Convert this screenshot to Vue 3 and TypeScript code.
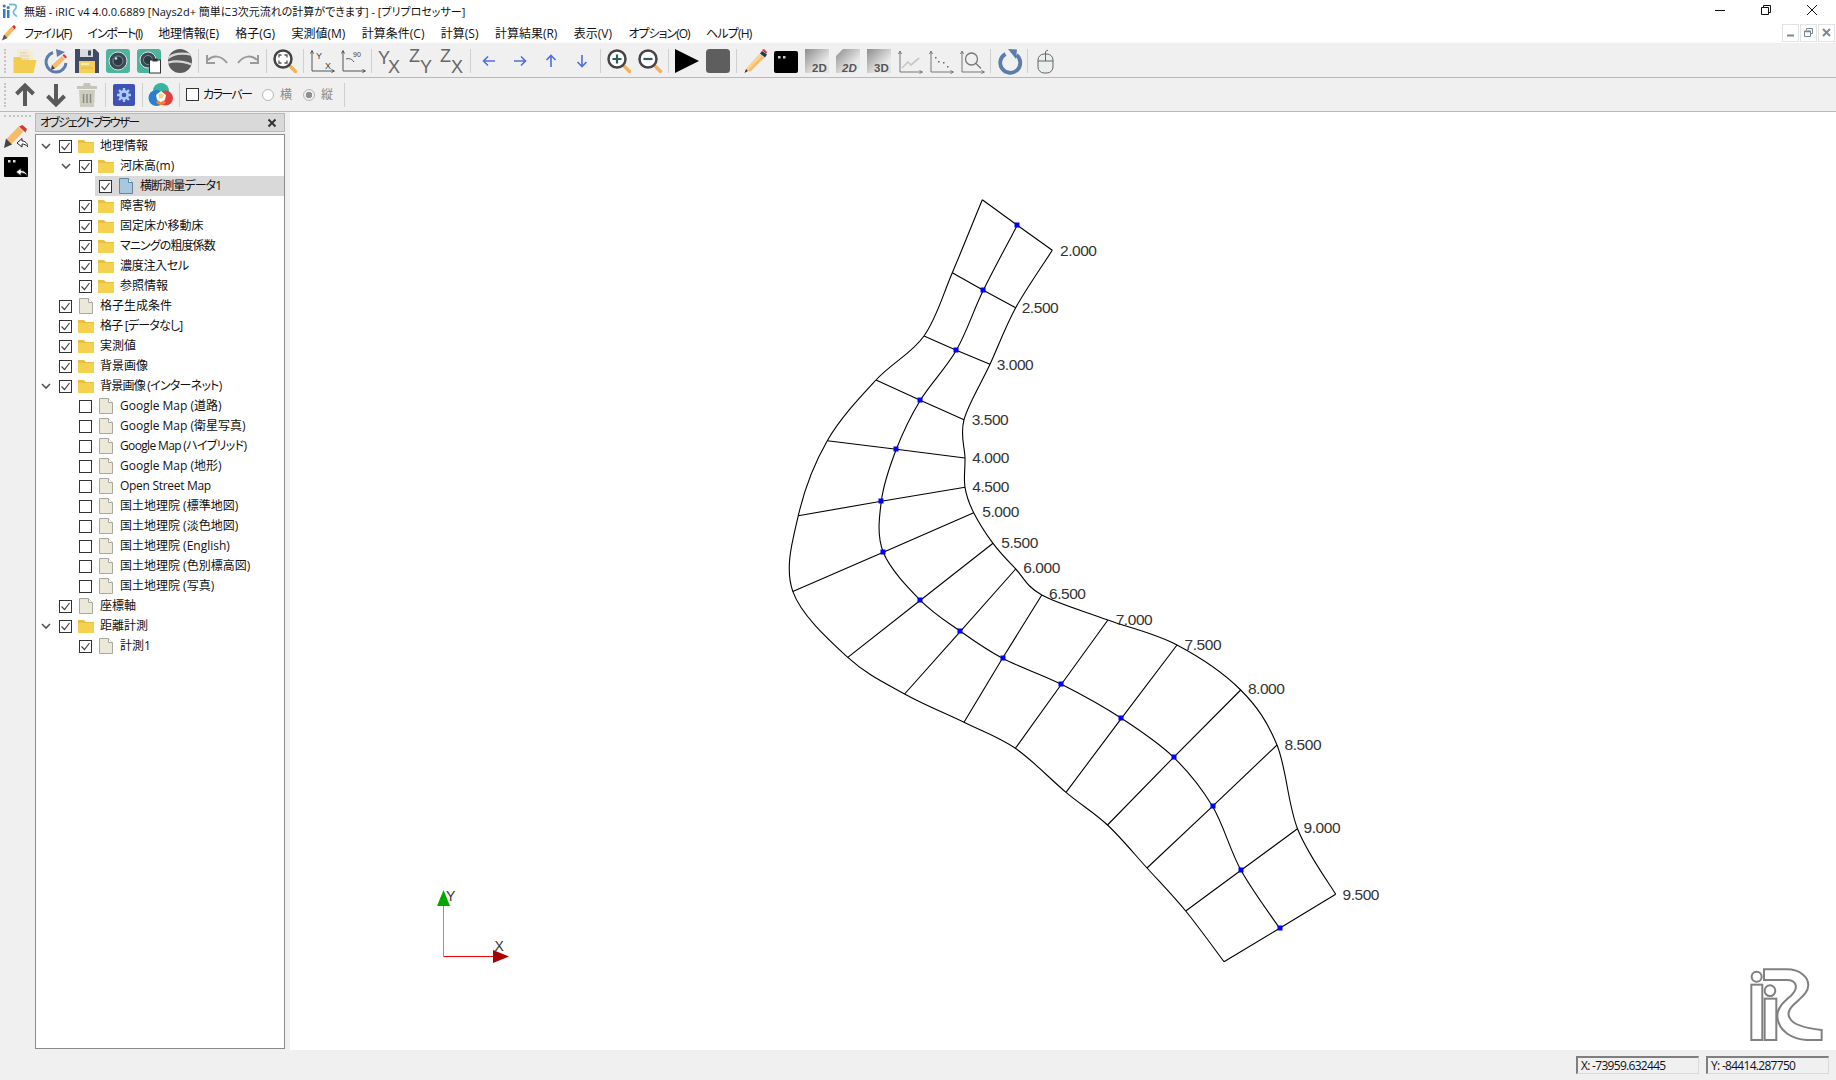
<script setup lang="ts">
type Pt = [number, number]
interface Row { level: number; arrow?: boolean; checked: boolean; icon: 'folder' | 'doc' | 'sel'; label: string; selected?: boolean; ls?: number }

const rows: Row[] = [
  { level: 0, arrow: true, checked: true, icon: 'folder', label: '地理情報' },
  { level: 1, arrow: true, checked: true, icon: 'folder', label: '河床高(m)' },
  { level: 2, checked: true, icon: 'sel', label: '横断測量データ1', selected: true, ls: -0.9 },
  { level: 1, checked: true, icon: 'folder', label: '障害物' },
  { level: 1, checked: true, icon: 'folder', label: '固定床か移動床' },
  { level: 1, checked: true, icon: 'folder', label: 'マニングの粗度係数', ls: -0.9 },
  { level: 1, checked: true, icon: 'folder', label: '濃度注入セル', ls: -0.3 },
  { level: 1, checked: true, icon: 'folder', label: '参照情報' },
  { level: 0, checked: true, icon: 'doc', label: '格子生成条件' },
  { level: 0, checked: true, icon: 'folder', label: '格子 [データなし]', ls: -0.8 },
  { level: 0, checked: true, icon: 'folder', label: '実測値' },
  { level: 0, checked: true, icon: 'folder', label: '背景画像' },
  { level: 0, arrow: true, checked: true, icon: 'folder', label: '背景画像 (インターネット)', ls: -0.75 },
  { level: 1, checked: false, icon: 'doc', label: 'Google Map (道路)' },
  { level: 1, checked: false, icon: 'doc', label: 'Google Map (衛星写真)' },
  { level: 1, checked: false, icon: 'doc', label: 'Google Map (ハイブリッド)', ls: -0.65 },
  { level: 1, checked: false, icon: 'doc', label: 'Google Map (地形)' },
  { level: 1, checked: false, icon: 'doc', label: 'Open Street Map', ls: -0.3 },
  { level: 1, checked: false, icon: 'doc', label: '国土地理院 (標準地図)' },
  { level: 1, checked: false, icon: 'doc', label: '国土地理院 (淡色地図)' },
  { level: 1, checked: false, icon: 'doc', label: '国土地理院 (English)' },
  { level: 1, checked: false, icon: 'doc', label: '国土地理院 (色別標高図)' },
  { level: 1, checked: false, icon: 'doc', label: '国土地理院 (写真)' },
  { level: 0, checked: true, icon: 'doc', label: '座標軸' },
  { level: 0, arrow: true, checked: true, icon: 'folder', label: '距離計測' },
  { level: 1, checked: true, icon: 'doc', label: '計測1' },
]

const menus = [
  { t: 'ファイル(F)', ls: -1.1 }, { t: 'インポート(I)', ls: -1.25 }, { t: '地理情報(E)', ls: -0.15 }, { t: '格子(G)', ls: 0 },
  { t: '実測値(M)', ls: 0 }, { t: '計算条件(C)', ls: 0 }, { t: '計算(S)', ls: 0 }, { t: '計算結果(R)', ls: 0 },
  { t: '表示(V)', ls: 0 }, { t: 'オプション(O)', ls: -1 }, { t: 'ヘルプ(H)', ls: -0.8 },
]

const left: Pt[] = [[982.3, 199.7], [952.3, 272.7], [924, 336], [876, 380], [827.3, 440.7], [798.3, 515.7], [792.8, 591.4], [847.8, 657.4], [904.6, 694], [964, 722.3], [1015.4, 748.3], [1066, 792.3], [1107.5, 825], [1147, 868], [1185.7, 911], [1224, 961.7]]
const mid: Pt[] = [[1017.3, 225.3], [983.3, 290.3], [956.3, 350.3], [920.3, 400.3], [896.3, 449.3], [881.3, 501.3], [883.3, 552.3], [920.4, 600.3], [960.4, 631.3], [1002.5, 658.3], [1061.4, 684.3], [1121.4, 718.3], [1173.6, 757.3], [1212.5, 806.3], [1241, 870.3], [1279.6, 928.3]]
const right: Pt[] = [[1052.3, 250.3], [1015.7, 307.7], [990, 364.3], [964, 419.7], [965, 458], [965, 487.3], [973.7, 512.7], [993, 543.3], [1015.7, 569], [1041.8, 595], [1107.9, 620], [1177, 645], [1240.7, 690], [1277, 745], [1297.5, 828.7], [1335.7, 894.3]]
const labels: { t: string; x: number; y: number }[] = [
  { t: '2.000', x: 1060, y: 250.7 }, { t: '2.500', x: 1021.7, y: 307.7 }, { t: '3.000', x: 996.7, y: 364.7 }, { t: '3.500', x: 971.7, y: 419.7 },
  { t: '4.000', x: 972.3, y: 457.7 }, { t: '4.500', x: 972.3, y: 486.7 }, { t: '5.000', x: 982.3, y: 511.7 }, { t: '5.500', x: 1001.3, y: 542.3 },
  { t: '6.000', x: 1023.3, y: 567.3 }, { t: '6.500', x: 1049, y: 593.7 }, { t: '7.000', x: 1115.7, y: 619.3 }, { t: '7.500', x: 1184.6, y: 644.3 },
  { t: '8.000', x: 1247.9, y: 688.3 }, { t: '8.500', x: 1284.6, y: 744.3 }, { t: '9.000', x: 1303.6, y: 827.3 }, { t: '9.500', x: 1342.5, y: 894.3 },
]

function spline(p: Pt[]): string {
  let d = `M${p[0][0]} ${p[0][1]}`
  for (let i = 0; i < p.length - 1; i++) {
    const a = p[Math.max(i - 1, 0)], b = p[i], c = p[i + 1], e = p[Math.min(i + 2, p.length - 1)]
    const c1: Pt = [b[0] + (c[0] - a[0]) / 6, b[1] + (c[1] - a[1]) / 6]
    const c2: Pt = [c[0] - (e[0] - b[0]) / 6, c[1] - (e[1] - b[1]) / 6]
    d += ` C${c1[0].toFixed(1)} ${c1[1].toFixed(1)} ${c2[0].toFixed(1)} ${c2[1].toFixed(1)} ${c[0]} ${c[1]}`
  }
  return d
}
const banks = [spline(left), spline(mid), spline(right)]
const cross = left.map((l, i) => `M${l[0]} ${l[1]} L${mid[i][0]} ${mid[i][1]} L${right[i][0]} ${right[i][1]}`)
const dots = mid.map(m => ({ x: Math.round(m[0]) - 2.5, y: Math.round(m[1]) - 2.5 }))
</script>

<template>
  <div class="app">
    <header class="titlebar">
      <svg class="applogo" viewBox="0 0 16 16"><rect x="1" y="6" width="2.5" height="9" fill="#2f7fc1"/><rect x="5" y="7" width="2.5" height="8" fill="#2f7fc1"/><circle cx="2.2" cy="3" r="1.6" fill="#2f7fc1"/><circle cx="6.2" cy="4.5" r="1.5" fill="#2f7fc1"/><path d="M7 1.5h4c4 0 4 3 2 5s-3 4 2 7" fill="none" stroke="#6fc0e0" stroke-width="1.8"/></svg>
      <span class="title">無題 - iRIC v4 4.0.0.6889 [Nays2d+ 簡単に3次元流れの計算ができます] - [プリプロセッサー]</span>
      <div class="winbtns">
        <span class="wb"><svg width="10" height="10" viewBox="0 0 10 10"><path d="M0 5.5h10" stroke="#111"/></svg></span>
        <span class="wb"><svg width="10" height="10" viewBox="0 0 10 10"><path d="M2.5 2.5V.5h7v7h-2M.5 2.5h7v7h-7z" fill="none" stroke="#111"/></svg></span>
        <span class="wb"><svg width="10" height="10" viewBox="0 0 10 10"><path d="M0 0l10 10M10 0L0 10" stroke="#111"/></svg></span>
      </div>
    </header>

    <nav class="menubar">
      <svg class="menupencil" viewBox="0 0 14 16"><path d="M3.500 11.500L11 3" stroke="#f5b968" stroke-width="4.200"/><path d="M10 1.500L12 0l2 2-1.500 2.500z" fill="#d8342c"/><path d="M2 9.500l3.500 3.500L0 15.500z" fill="#555"/></svg>
      <ul class="menus"><li v-for="m in menus" :key="m.t" :style="{ letterSpacing: m.ls + 'px' }">{{ m.t }}</li></ul>
      <div class="mdibtns">
        <span class="mb"><svg width="9" height="9" viewBox="0 0 9 9"><path d="M1 7.500h7" stroke="#7c8794" stroke-width="2"/></svg></span>
        <span class="mb"><svg width="9" height="9" viewBox="0 0 9 9"><path d="M2.500 2V.5h6v5H7M.5 3h6v5.500h-6z" fill="none" stroke="#7c8794"/><path d="M.5 3.500h6" stroke="#7c8794" stroke-width="1.500"/></svg></span>
        <span class="mb"><svg width="9" height="9" viewBox="0 0 9 9"><path d="M1 1l7 7M8 1L1 8" stroke="#7c8794" stroke-width="2"/></svg></span>
      </div>
    </nav>

    <div class="toolbar">
      <i class="grip"></i>
      <!-- open -->
      <svg class="ic" viewBox="0 0 24 24"><path d="M4 0h12l4 4v12H4z" fill="#f4ecd2"/><path d="M7 4h7M7 7h9M7 10h9" stroke="#d9cfb0"/><path d="M.5 8h7l2 3h14l-3 13H.5z" fill="#f3cd4f"/></svg>
      <!-- refresh pencil -->
      <svg class="ic" viewBox="0 0 24 24"><path d="M9 3.500A10 10 0 1 0 22 14" fill="none" stroke="#5d7cab" stroke-width="3"/><path d="M12 0l9 3-8 5z" fill="#5d7cab"/><path d="M18 7l3 3-9 9-5 2 1-5z" fill="#f6bb6b"/><path d="M18.500 6.500L20 5l3 3-1.500 1.500z" fill="#d73a3a"/><path d="M8 16l-1 5 4-1.500z" fill="#444"/></svg>
      <!-- save -->
      <svg class="ic" viewBox="0 0 24 24"><path d="M0 0h20l4 4v20H0z" fill="#3f4b66"/><rect x="5" y="0" width="13" height="8" fill="#dcdcdc"/><rect x="13" y="1.500" width="3" height="5" fill="#3f4b66"/><rect x="4" y="12" width="16" height="12" fill="#f5cf57"/><path d="M6 15h8" stroke="#fff" stroke-width="1.200"/><path d="M6 19h12" stroke="#e8b93a"/></svg>
      <!-- camera -->
      <svg class="ic" viewBox="0 0 24 24"><rect width="24" height="24" rx="3" fill="#4fb49d"/><circle cx="12" cy="12" r="9" fill="#3c4a55" stroke="#d5e4e0" stroke-width="1"/><circle cx="12" cy="12" r="5" fill="#2c3a46" stroke="#7a8b99"/><circle cx="10" cy="9.500" r="1.300" fill="#cfe0e8"/></svg>
      <svg class="ic" viewBox="0 0 24 24"><rect width="24" height="24" rx="3" fill="#4fb49d"/><circle cx="11" cy="11" r="8" fill="#3c4a55" stroke="#d5e4e0" stroke-width="1"/><circle cx="11" cy="11" r="4.500" fill="#2c3a46" stroke="#7a8b99"/><rect x="12.500" y="11" width="11" height="13" fill="#fff" stroke="#333"/><rect x="15.500" y="9.500" width="5" height="3" fill="#333"/></svg>
      <!-- globe -->
      <svg class="ic" viewBox="0 0 24 24"><defs><clipPath id="gl"><circle cx="12" cy="12" r="12"/></clipPath></defs><circle cx="12" cy="12" r="12" fill="#5c5c5c"/><g clip-path="url(#gl)" fill="none" stroke="#d8d8d8" stroke-width="2.200"><path d="M-1 10C6 3 16 4 25 6"/><path d="M-1 14c8-3 16-2 26 2"/></g></svg>
      <i class="sep"></i>
      <svg class="ic" viewBox="0 0 24 24"><path d="M3 11c5-5 13-5 19 3" fill="none" stroke="#9a9a9a" stroke-width="2"/><path d="M2 6v8h8" fill="none" stroke="#9a9a9a" stroke-width="2"/></svg>
      <svg class="ic" viewBox="0 0 24 24"><path d="M21 11c-5-5-13-5-19 3" fill="none" stroke="#9a9a9a" stroke-width="2"/><path d="M22 6v8h-8" fill="none" stroke="#9a9a9a" stroke-width="2"/></svg>
      <i class="sep"></i>
      <svg class="ic" viewBox="0 0 24 24"><path d="M15 15l7.500 7.500" stroke="#f2b15f" stroke-width="3.500" stroke-linecap="round"/><circle cx="10" cy="10" r="8.500" fill="#fff" stroke="#444" stroke-width="2.500"/><path d="M6 8.500V6h2.500M11.500 6H14v2.500M14 11.500V14h-2.500M8.500 14H6v-2.500" fill="none" stroke="#555" stroke-width="1.300"/></svg>
      <i class="sep"></i>
      <svg class="ic" viewBox="0 0 24 24"><path d="M2 22V2M.5 4.500L2 1.500l1.500 3M2 22h22M21.500 20.500l3 1.500-3 1.500" fill="none" stroke="#555"/><text x="6" y="10" class="ict" font-size="9">Y</text><text x="15" y="20" class="ict" font-size="9">X</text></svg>
      <svg class="ic" viewBox="0 0 24 24"><path d="M2 22V2M.5 4.500L2 1.500l1.500 3M2 22h22M21.500 20.500l3 1.500-3 1.500M13 13c-2-3-5-4-8-3" fill="none" stroke="#555"/><text x="12" y="8" class="ict" font-size="7">90</text></svg>
      <i class="sep"></i>
      <svg class="ic" viewBox="0 0 24 24"><text x="0" y="15" class="icx" font-size="18">Y</text><text x="10" y="24" class="icx" font-size="18">X</text></svg>
      <svg class="ic" viewBox="0 0 24 24"><text x="0" y="13" class="icx" font-size="18">Z</text><text x="11" y="24" class="icx" font-size="18">Y</text></svg>
      <svg class="ic" viewBox="0 0 24 24"><text x="0" y="13" class="icx" font-size="18">Z</text><text x="11" y="24" class="icx" font-size="18">X</text></svg>
      <i class="sep"></i>
      <svg class="ic" viewBox="0 0 24 24"><path d="M18 12H6.500M11 7.500L6.500 12l4.500 4.500" fill="none" stroke="#4d6fe3" stroke-width="1.600"/></svg>
      <svg class="ic" viewBox="0 0 24 24"><path d="M6 12h11.500M13 7.500l4.500 4.500-4.500 4.500" fill="none" stroke="#4d6fe3" stroke-width="1.600"/></svg>
      <svg class="ic" viewBox="0 0 24 24"><path d="M12 18V6.500M7.500 11L12 6.500l4.500 4.500" fill="none" stroke="#4d6fe3" stroke-width="1.600"/></svg>
      <svg class="ic" viewBox="0 0 24 24"><path d="M12 6v11.500M7.500 13l4.500 4.500 4.500-4.500" fill="none" stroke="#4d6fe3" stroke-width="1.600"/></svg>
      <i class="sep"></i>
      <svg class="ic" viewBox="0 0 24 24"><path d="M15 15l7.500 7.500" stroke="#f2b15f" stroke-width="3.500" stroke-linecap="round"/><circle cx="10" cy="10" r="8.500" fill="#fff" stroke="#444" stroke-width="2.500"/><path d="M5.500 10h9M10 5.500v9" stroke="#2f5a5a" stroke-width="2.200"/></svg>
      <svg class="ic" viewBox="0 0 24 24"><path d="M15 15l7.500 7.500" stroke="#f2b15f" stroke-width="3.500" stroke-linecap="round"/><circle cx="10" cy="10" r="8.500" fill="#fff" stroke="#444" stroke-width="2.500"/><path d="M5.500 10h9" stroke="#2f5a5a" stroke-width="2.200"/></svg>
      <i class="sep"></i>
      <svg class="ic" viewBox="0 0 24 24"><path d="M0 0l24 12L0 24z" fill="#000"/></svg>
      <svg class="ic" viewBox="0 0 24 24"><rect width="24" height="24" rx="3.500" fill="#5e5e5e"/></svg>
      <i class="sep"></i>
      <svg class="ic" viewBox="0 0 24 24"><path d="M16.500 5l5 3.500L7 23l-4-3z" fill="#f6bb6b"/><path d="M16.500 5l2.500 2L5 21.500 3 20z" fill="#f9d294"/><path d="M17 4.500L19 2l5 3.500-2 3z" fill="#1d3b55"/><path d="M19 1l2-1 3 3-1 2z" fill="#d9363a"/><path d="M3 20l-1.500 4L5 22z" fill="#333"/></svg>
      <svg class="ic" viewBox="0 0 24 24"><rect y="2" width="24" height="22" rx="2" fill="#000"/><path d="M4 7h2.500v2.500H4zM9 7h2.500v2.500H9z" fill="#ccc"/></svg>
      <svg class="ic" viewBox="0 0 24 24"><defs><linearGradient id="g2" x1="0" y1="0" x2="1" y2="1"><stop offset="0" stop-color="#8c8c8c"/><stop offset="0.700" stop-color="#eaeaea"/><stop offset="1" stop-color="#e0e0e0"/></linearGradient></defs><rect width="24" height="24" fill="url(#g2)"/><text x="7" y="23" class="ic2" font-size="11.500">2D</text></svg>
      <svg class="ic" viewBox="0 0 24 24"><path d="M7 0h17v18l-6 6H0V7z" fill="url(#g2)"/><text x="6" y="23" class="ic2" font-style="italic" font-size="11.500">2D</text></svg>
      <svg class="ic" viewBox="0 0 24 24"><rect width="24" height="24" fill="url(#g2)"/><text x="7" y="23" class="ic2" font-size="11.500">3D</text></svg>
      <svg class="ic" viewBox="0 0 24 24"><path d="M2 23V3M.5 5L2 2l1.500 3M2 23h22M21.500 21.500l3 1.500-3 1.500" fill="none" stroke="#777"/><path d="M4 19l6-6 3 3 8-7" fill="none" stroke="#c9c9c9" stroke-width="1.700"/></svg>
      <svg class="ic" viewBox="0 0 24 24"><path d="M2 23V3M.5 5L2 2l1.500 3M2 23h22M21.500 21.500l3 1.500-3 1.500" fill="none" stroke="#777"/><path d="M6 8h1.500v1.500H6zM9 12h1.500v1.500H9zM14 13h1.500v1.500H14zM18 17h1.500v1.500H18z" fill="#666"/></svg>
      <svg class="ic" viewBox="0 0 24 24"><path d="M2 23V3M.5 5L2 2l1.500 3M2 23h22M21.500 21.500l3 1.500-3 1.500" fill="none" stroke="#777"/><circle cx="11.500" cy="10" r="6" fill="none" stroke="#777" stroke-width="1.300"/><path d="M16 14.500l5 5" stroke="#777" stroke-width="1.300"/></svg>
      <i class="sep"></i>
      <svg class="ic" viewBox="0 0 24 24"><path d="M8.500 5A10 10 0 1 0 19.500 6" fill="none" stroke="#5b7dad" stroke-width="3.800"/><path d="M11 0l9 .5-1 9.500z" fill="#5b7dad"/></svg>
      <i class="sep"></i>
      <svg class="ic" viewBox="0 0 24 24"><rect x="4" y="5" width="15" height="19" rx="6" fill="#e9eeee" stroke="#666"/><path d="M4 12h15M11.500 5v7M11.500 5V2.500L14 1" fill="none" stroke="#666"/></svg>
    </div>

    <div class="toolbar">
      <i class="grip"></i>
      <svg class="ic" viewBox="0 0 24 24"><path d="M12 23V3M3.500 11L12 2.500l8.500 8.500" fill="none" stroke="#5a5a5a" stroke-width="4"/></svg>
      <svg class="ic" viewBox="0 0 24 24"><path d="M12 1v20M3.500 13l8.500 8.500 8.500-8.500" fill="none" stroke="#5a5a5a" stroke-width="4"/></svg>
      <svg class="ic" viewBox="0 0 24 24"><path d="M9 0h6l1 3H8z" fill="#c4c4b8"/><rect x="2" y="3" width="20" height="3" fill="#c4c4b8"/><path d="M4 7h16l-1 17H5z" fill="#ccccbf"/><path d="M8.500 11v9M12 11v9M15.500 11v9" stroke="#8a8a80" stroke-width="1.500"/></svg>
      <i class="sep"></i>
      <svg class="ic" viewBox="0 0 24 24"><rect x="1" y="1" width="22" height="22" rx="2" fill="#3f51b5"/><path d="M12 5v14M5 12h14M7 7l10 10M17 7L7 17" stroke="#a9cdf5" stroke-width="2.400"/><circle cx="12" cy="12" r="5" fill="#a9cdf5"/><circle cx="12" cy="12" r="2.300" fill="#3f51b5"/></svg>
      <i class="sep"></i>
      <svg class="ic" viewBox="0 0 24 24"><circle cx="12" cy="8" r="8" fill="#35b59d"/><circle cx="7.500" cy="15" r="8" fill="#2a7fd0"/><circle cx="16.500" cy="15" r="7.500" fill="#e2403c"/><path d="M7 19c2 4 8 4 10 0l-5-3z" fill="#f2862e"/><path d="M12 8l5 4-1 5-4 2-4-2-1-5z" fill="#fff"/><circle cx="12" cy="13" r="2.500" fill="#f6d87a"/></svg>
      <i class="sep"></i>
      <label class="cbx big"></label>
      <span class="cblabel">カラーバー</span>
      <span class="radio"></span><span class="rlabel">横</span>
      <span class="radio on"></span><span class="rlabel last">縦</span>
      <i class="sep"></i>
    </div>

    <main class="main">
      <aside class="strip">
        <i class="hgrip"></i>
        <svg class="stripic" viewBox="0 0 24 24"><path d="M4.500 17L17 4" stroke="#f6bb6b" stroke-width="7"/><path d="M15 1.500L18.500 0 23 4l-1.500 3.500z" fill="#d9363a"/><path d="M2 13.500L8 19.500 0 23z" fill="#444"/><path d="M13 18l5-4.500v2.500c3 0 5.500 2 6 6-1.500-2-4-3-6-3v3z" fill="#fff" stroke="#222"/></svg>
        <svg class="stripic" viewBox="0 0 24 24"><rect y="0" width="24" height="20" rx="1" fill="#000"/><path d="M4 3h2.500v2.500H4zM9 3h2.500v2.500H9z" fill="#ddd"/><path d="M12 15l5-4v2.500c3 0 6 2 6.500 5.500-1.500-2-4-3-6.500-3v3z" fill="#fff" stroke="#222"/></svg>
      </aside>
      <section class="dock">
        <div class="docktitle"><span class="dt">オブジェクトブラウザー</span><svg width="10" height="10" viewBox="0 0 10 10"><path d="M1.500 1.500l7 7M8.500 1.500l-7 7" stroke="#333" stroke-width="2"/></svg></div>
        <div class="tree">
          <div v-for="r in rows" :key="r.label" class="row" :class="'lv' + r.level">
            <span class="chev"><svg v-if="r.arrow" width="10" height="7" viewBox="0 0 10 7"><path d="M1 1l4 4 4-4" fill="none" stroke="#555" stroke-width="1.600"/></svg></span>
            <div class="rowbody" :class="{ sel: r.selected }">
              <span class="cbx"><svg v-if="r.checked" width="11" height="11" viewBox="0 0 11 11"><path d="M1.500 5.500l3 3 5-6.500" fill="none" stroke="#444" stroke-width="1.200"/></svg></span>
              <svg v-if="r.icon === 'folder'" class="ti" viewBox="0 0 16 16"><path d="M0 2h6l2 2h8v2H0z" fill="#e9c044"/><path d="M0 5h16v10H0z" fill="#f4d24f"/></svg>
              <svg v-else class="ti" viewBox="0 0 16 16"><path d="M1.500 .5h9l4 4v11h-13z" :fill="r.icon === 'sel' ? '#a9c8dc' : '#ece8d8'" :stroke="r.icon === 'sel' ? '#5d86a3' : '#a8a8a0'"/><path d="M10.500 .5v4h4" fill="#fff" :stroke="r.icon === 'sel' ? '#5d86a3' : '#a8a8a0'"/></svg>
              <span class="tl" :style="{ letterSpacing: (r.ls ?? 0) + 'px' }">{{ r.label }}</span>
            </div>
          </div>
        </div>
      </section>
      <div class="gap"></div>
      <div class="canvas">
        <svg class="gl" viewBox="290 112 1546 938" width="1546" height="938">
          <g fill="none" stroke="#000" stroke-width="1.100">
            <path v-for="(b, i) in banks" :key="'b' + i" :d="b"/>
            <path v-for="(c, i) in cross" :key="'c' + i" :d="c"/>
          </g>
          <rect v-for="(d, i) in dots" :key="'d' + i" :x="d.x" :y="d.y" width="5" height="5" fill="#0000ff"/>
          <text v-for="l in labels" :key="l.t" :x="l.x" :y="l.y + 5.5" class="gl-label">{{ l.t }}</text>
          <!-- axes -->
          <path d="M443.500 906V956.500" stroke="#2fe02f" stroke-width="1"/>
          <path d="M443.500 956.500H493" stroke="#ff0000" stroke-width="1"/>
          <path d="M443.500 890l6.500 16h-13z" fill="#00a800"/>
          <path d="M509 956.500l-16 6.500v-13z" fill="#a80000"/>
          <text x="446" y="901" class="axis">Y</text>
          <text x="494.500" y="951" class="axis">X</text>
          <!-- logo -->
          <g fill="none" stroke="#808080" stroke-width="2" transform="translate(1560 950) scale(.3333)">
            <circle cx="590" cy="80" r="15" stroke-width="6"/>
            <rect x="574" y="104" width="33" height="166" stroke-width="6"/>
            <circle cx="630" cy="122" r="16" stroke-width="6"/>
            <rect x="614" y="146" width="35" height="124" stroke-width="6"/>
            <path d="M612 58H680C725 58 745 85 745 105C745 130 720 145 700 165C685 180 683 195 690 205C700 225 740 235 785 240V270H740C700 268 655 245 652 200C650 170 680 150 695 135C715 115 712 90 680 90H612Z" stroke-width="6"/>
          </g>
        </svg>
      </div>
    </main>

    <footer class="status">
      <span class="field">X: -73959.632445</span>
      <span class="field">Y: -84414.287750</span>
    </footer>
  </div>
</template>

<style scoped>
.app { width: 1836px; height: 1080px; display: flex; flex-direction: column; background: #fff; color: #111; font: 12px/16px "Open Sans", "Noto Sans CJK JP", sans-serif; font-feature-settings: "palt"; overflow: hidden; }
.titlebar { height: 22px; display: flex; align-items: center; padding-left: 2px; flex: none; }
.applogo { width: 16px; height: 16px; margin-right: 6px; }
.title { flex: 1; white-space: nowrap; font-size: 11px; padding-top: 1px; }
.winbtns { display: flex; height: 20px; align-self: flex-start; padding-right: 1px; }
.wb { width: 46px; display: flex; align-items: center; justify-content: center; }
.menubar { height: 22px; display: flex; align-items: center; padding-left: 2px; flex: none; border-bottom: 1px solid #eeeeee; box-sizing: border-box; }
.menupencil { width: 14px; height: 16px; margin-right: 8px; }
.menus { display: flex; gap: 16.4px; list-style: none; margin: 0; padding: 2px 0 0; flex: 1; }
.mdibtns { display: flex; gap: 1px; padding-right: 1px; }
.mb { width: 15px; height: 16px; border: 1px solid #e2e2e2; display: flex; align-items: center; justify-content: center; }
.toolbar { height: 34px; flex: none; box-sizing: border-box; display: flex; align-items: center; background: #f0f0f0; border-bottom: 1px solid #b9b9b9; padding-left: 4px; }
.grip { width: 3px; height: 24px; border-left: 2px dotted #c4c4c4; box-sizing: border-box; margin-right: 2.5px; }
.ic { width: 24px; height: 24px; margin: 0 3.5px; flex: none; overflow: visible; }
.ict { font-family: "Liberation Sans", sans-serif; fill: #444; }
.icx { font-family: "Liberation Sans", sans-serif; fill: #666; }
.ic2 { font-family: "Liberation Sans", sans-serif; font-weight: 700; fill: #555; }
.sep { width: 1px; height: 24px; background: #cfcfcf; margin: 0 2.5px; flex: none; }
.cbx { width: 13px; height: 13px; box-sizing: border-box; border: 1px solid #333; background: #fff; display: flex; align-items: center; justify-content: center; flex: none; }
.big { margin-left: 3.5px; }
.cblabel { margin-left: 4px; width: 59px; color: #111; white-space: nowrap; letter-spacing: -1.6px; }
.radio { width: 12px; height: 12px; box-sizing: border-box; border-radius: 50%; border: 1px solid #b5b5b5; background: #fff; flex: none; position: relative; }
.radio.on { background: radial-gradient(circle, #8f8f8f 0 3px, #efefef 3.5px); }
.rlabel { margin: 0 11px 0 6px; color: #8a8a8a; }
.rlabel.last { margin-right: 8px; }
.main { flex: 1; display: flex; min-height: 0; background: #f0f0f0; }
.strip { width: 35px; flex: none; box-sizing: border-box; padding: 3px 0 0 4px; display: flex; flex-direction: column; }
.hgrip { display: block; width: 27px; height: 2px; border-top: 2px dotted #c4c4c4; }
.stripic { width: 24px; height: 24px; margin-bottom: 7px; margin-top: 6px; }
.stripic + .stripic { margin-top: 1px; }
.dock { width: 250px; flex: none; display: flex; flex-direction: column; padding: 1px 0; box-sizing: border-box; }
.docktitle { height: 19px; flex: none; box-sizing: border-box; background: #d9d9d9; border: 1px solid #b8b8b8; display: flex; align-items: center; justify-content: space-between; padding: 1px 7px 0 4px; }
.dt { letter-spacing: -1.8px; }
.tree { flex: 1; margin-top: 2px; background: #fff; border: 1px solid #8a8a8a; border-width: 1px 1.500px; padding-top: 1px; box-sizing: border-box; }
.row { height: 20px; display: flex; align-items: stretch; }
.lv1 { padding-left: 20px; }
.lv2 { padding-left: 40px; }
.chev { width: 19px; flex: none; display: flex; align-items: center; justify-content: center; }
.rowbody { flex: 1; display: flex; align-items: center; padding-left: 4px; }
.rowbody.sel { background: #d9d9d9; }
.ti { width: 16px; height: 16px; margin: 0 6px; flex: none; }
.tl { white-space: nowrap; }
.gap { width: 5px; flex: none; }
.canvas { flex: 1; background: #fff; position: relative; min-width: 0; }
.gl { display: block; }
.gl-label { font: 15.5px "Liberation Sans", sans-serif; letter-spacing: -.45px; fill: #333; }
.axis { font: 14px "Liberation Sans", sans-serif; fill: #333; }
.status { height: 30px; flex: none; display: flex; justify-content: flex-end; gap: 7px; padding: 6px 7px 0 0; box-sizing: border-box; background: #f0f0f0; }
.field { width: 123px; height: 18px; box-sizing: border-box; border: 1px solid; border-color: #7f7f7f #d9d9d9 #d9d9d9 #7f7f7f; border-width: 2px 1px 1px 2px; padding-left: 3px; line-height: 15px; white-space: nowrap; letter-spacing: -.7px; }
</style>

<style>
html, body { margin: 0; background: #fff; overflow: hidden; }
</style>
